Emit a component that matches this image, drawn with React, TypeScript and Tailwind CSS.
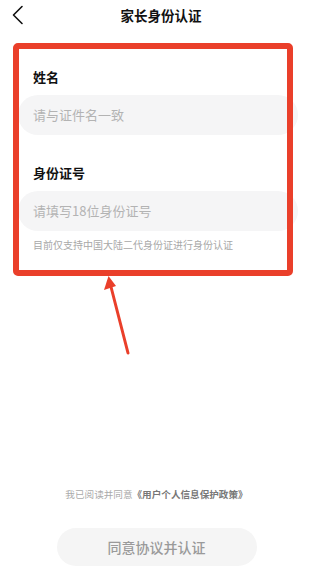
import React from 'react';

const font = { fontFamily: '"Noto Sans CJK SC", "Noto Sans", sans-serif' };

function BackIcon() {
  return (
    <svg width="12" height="20" viewBox="0 0 12 20" fill="none">
      <path d="M10 1.5 1.5 10 10 18.5" stroke="#111" strokeWidth="1.6" strokeLinecap="round" strokeLinejoin="round" />
    </svg>
  );
}

function Field({ label, placeholder }: { label: string; placeholder: string }) {
  return (
    <div className="flex flex-col">
      <div className="pl-[33px] text-[13px] font-bold leading-[18px] text-[#111]">{label}</div>
      <div className="ml-[18px] mt-[9px] flex h-[40px] w-[280px] items-center rounded-full bg-[#f5f5f6] pl-[15px] text-[13px] text-[#b3b3b3]">
        {placeholder}
      </div>
    </div>
  );
}

export default function App() {
  return (
    <div className="relative flex h-[581px] w-[322px] flex-col overflow-hidden bg-white" style={font}>
      <header className="relative flex h-[30px] items-center justify-center">
        <div className="absolute left-[12px] top-[5px]">
          <BackIcon />
        </div>
        <h1 className="text-[13.5px] font-bold text-[#111]">家长身份认证</h1>
      </header>

      <div className="mt-[38px] flex flex-col gap-[29px]">
        <Field label="姓名" placeholder="请与证件名一致" />
        <div className="flex flex-col">
          <Field label="身份证号" placeholder="请填写18位身份证号" />
          <p className="mt-[7px] pl-[33px] text-[10px] leading-[14px] text-[#a8a8a8]">目前仅支持中国大陆二代身份证进行身份认证</p>
        </div>
      </div>

      <div className="mt-auto flex flex-col items-center pb-[15px] pr-[9px]">
        <p className="text-[9.6px] leading-[14px] text-[#aaa]">
          我已阅读并同意<span className="font-bold text-[#777]">《用户个人信息保护政策》</span>
        </p>
        <button className="mt-[27px] h-[38px] w-[200px] rounded-full bg-[#f5f5f5] text-[14px] font-medium text-[#9a9a9a]">
          同意协议并认证
        </button>
      </div>

      {/* annotation overlay */}
      <div className="pointer-events-none absolute left-[13px] top-[43px] h-[233px] w-[280px] rounded-[5px] border-[6.5px] border-[#ea3f2a]" />
      <svg className="pointer-events-none absolute left-0 top-0" width="322" height="581" viewBox="0 0 322 581">
        <path d="M128 353 110 283" stroke="#ea3f2a" strokeWidth="3" strokeLinecap="round" />
        <path d="M108.5 276 104 290 116 286Z" fill="#ea3f2a" />
      </svg>
    </div>
  );
}
